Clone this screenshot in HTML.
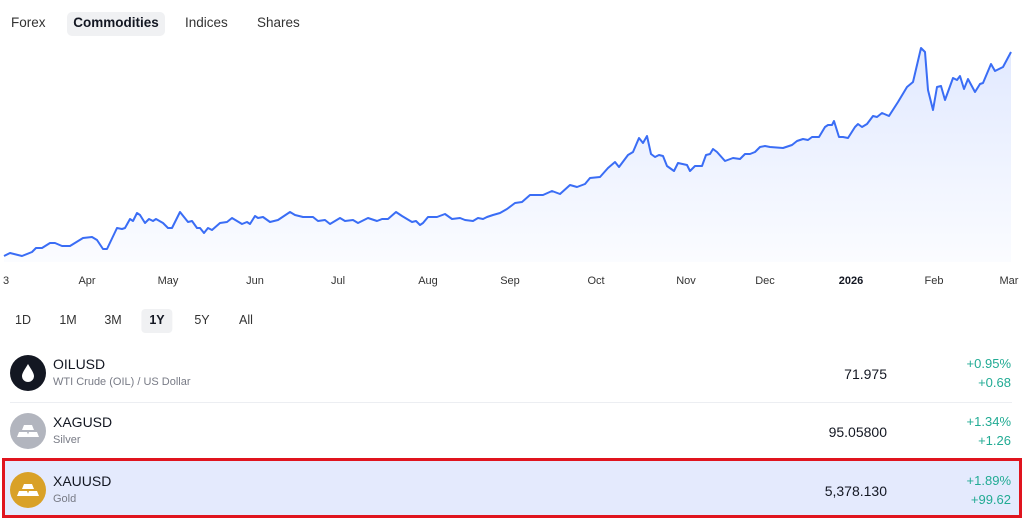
<!DOCTYPE html>
<html><head><meta charset="utf-8"><style>
*{margin:0;padding:0;box-sizing:border-box}
body{width:1024px;height:519px;background:#fff;font-family:"Liberation Sans",sans-serif;color:#131722;position:relative;overflow:hidden}
.a{position:absolute;white-space:nowrap}
.tab{top:12px;height:24px;line-height:22px;font-size:13.5px;color:#333}
.ax{top:275px;font-size:11px;color:#333;transform:translateX(-50%)}
.tb{top:309px;height:24px;line-height:22px;font-size:12.5px;color:#333;transform:translateX(-50%);padding:0 8px;border-radius:4px}
.sym{left:53px;font-size:14px;color:#131722}
.sub{left:53px;font-size:11px;color:#787b86}
.pr{right:137px;font-size:14px;color:#131722}
.ch{right:13px;font-size:13px;color:#22ab94;text-align:right}
.ic{position:absolute;left:10px;width:36px;height:36px;border-radius:50%}
</style></head><body>
<div class="a tab" style="left:11px">Forex</div>
<div class="a tab" style="left:67px;width:98px;background:#f0f1f3;border-radius:5px;text-align:center;font-weight:bold;color:#131722">Commodities</div>
<div class="a tab" style="left:185px">Indices</div>
<div class="a tab" style="left:257px">Shares</div>

<svg class="a" style="left:0;top:0" width="1024" height="270">
<defs><linearGradient id="g" x1="0" y1="0" x2="0" y2="1"><stop offset="0" stop-color="#2962ff" stop-opacity="0.14"/><stop offset="1" stop-color="#2962ff" stop-opacity="0.02"/></linearGradient></defs>
<path d="M4,256 L10,253 L22,256 L32,252 L36,248 L42,248 L50,243 L55,243 L62,246 L70,246 L83,238 L92,237 L97,240 L103,249 L107,249 L117,228 L122,229 L125,228 L130,219 L133,221 L137,213 L140,215 L145,223 L149,219 L153,221 L156,219 L163,223 L168,228 L172,228 L180,212 L188,222 L192,221 L197,228 L200,228 L204,233 L208,228 L212,230 L220,223 L227,222 L232,218 L242,224 L247,222 L250,224 L255,216 L258,218 L263,217 L270,222 L278,220 L290,212 L295,215 L303,217 L313,217 L318,221 L325,220 L330,224 L340,218 L345,221 L353,220 L358,223 L368,218 L377,221 L382,219 L388,219 L396,212 L402,216 L412,222 L416,221 L420,225 L423,223 L428,217 L437,217 L445,214 L452,219 L460,218 L465,220 L473,221 L478,218 L483,219 L487,217 L493,215 L500,213 L507,209 L515,203 L522,202 L530,195 L543,195 L552,191 L560,194 L570,185 L577,187 L585,184 L590,178 L600,177 L608,168 L615,162 L619,167 L628,155 L633,152 L639,138 L643,143 L647,136 L651,154 L655,157 L659,155 L663,156 L667,166 L674,171 L678,163 L687,165 L690,171 L695,166 L702,166 L706,155 L710,154 L713,149 L717,152 L725,161 L733,158 L740,159 L745,154 L750,154 L755,152 L760,147 L765,146 L770,147 L783,148 L792,145 L797,141 L803,139 L808,140 L812,137 L819,137 L825,127 L828,125 L832,125 L834,121 L839,137 L843,137 L848,138 L855,127 L858,124 L862,127 L867,124 L873,116 L877,117 L882,113 L889,116 L898,102 L907,87 L913,82 L921,48 L925,52 L928,90 L933,110 L937,87 L941,86 L945,100 L953,78 L957,80 L960,76 L964,89 L968,79 L975,92 L980,84 L983,83 L991,64 L995,71 L1003,67 L1011,52 L1011,262 L4,262 Z" fill="url(#g)"/>
<path d="M4,256 L10,253 L22,256 L32,252 L36,248 L42,248 L50,243 L55,243 L62,246 L70,246 L83,238 L92,237 L97,240 L103,249 L107,249 L117,228 L122,229 L125,228 L130,219 L133,221 L137,213 L140,215 L145,223 L149,219 L153,221 L156,219 L163,223 L168,228 L172,228 L180,212 L188,222 L192,221 L197,228 L200,228 L204,233 L208,228 L212,230 L220,223 L227,222 L232,218 L242,224 L247,222 L250,224 L255,216 L258,218 L263,217 L270,222 L278,220 L290,212 L295,215 L303,217 L313,217 L318,221 L325,220 L330,224 L340,218 L345,221 L353,220 L358,223 L368,218 L377,221 L382,219 L388,219 L396,212 L402,216 L412,222 L416,221 L420,225 L423,223 L428,217 L437,217 L445,214 L452,219 L460,218 L465,220 L473,221 L478,218 L483,219 L487,217 L493,215 L500,213 L507,209 L515,203 L522,202 L530,195 L543,195 L552,191 L560,194 L570,185 L577,187 L585,184 L590,178 L600,177 L608,168 L615,162 L619,167 L628,155 L633,152 L639,138 L643,143 L647,136 L651,154 L655,157 L659,155 L663,156 L667,166 L674,171 L678,163 L687,165 L690,171 L695,166 L702,166 L706,155 L710,154 L713,149 L717,152 L725,161 L733,158 L740,159 L745,154 L750,154 L755,152 L760,147 L765,146 L770,147 L783,148 L792,145 L797,141 L803,139 L808,140 L812,137 L819,137 L825,127 L828,125 L832,125 L834,121 L839,137 L843,137 L848,138 L855,127 L858,124 L862,127 L867,124 L873,116 L877,117 L882,113 L889,116 L898,102 L907,87 L913,82 L921,48 L925,52 L928,90 L933,110 L937,87 L941,86 L945,100 L953,78 L957,80 L960,76 L964,89 L968,79 L975,92 L980,84 L983,83 L991,64 L995,71 L1003,67 L1011,52" fill="none" stroke="#3a6df5" stroke-width="2" stroke-linejoin="round"/>
</svg>

<div class="a ax" style="left:6px">3</div>
<div class="a ax" style="left:87px">Apr</div>
<div class="a ax" style="left:168px">May</div>
<div class="a ax" style="left:255px">Jun</div>
<div class="a ax" style="left:338px">Jul</div>
<div class="a ax" style="left:428px">Aug</div>
<div class="a ax" style="left:510px">Sep</div>
<div class="a ax" style="left:596px">Oct</div>
<div class="a ax" style="left:686px">Nov</div>
<div class="a ax" style="left:765px">Dec</div>
<div class="a ax" style="left:851px;font-weight:bold;color:#131722">2026</div>
<div class="a ax" style="left:934px">Feb</div>
<div class="a ax" style="left:1009px">Mar</div>

<div class="a tb" style="left:23px">1D</div>
<div class="a tb" style="left:68px">1M</div>
<div class="a tb" style="left:113px">3M</div>
<div class="a tb" style="left:157px;background:#f0f1f3;font-weight:bold;color:#131722">1Y</div>
<div class="a tb" style="left:202px">5Y</div>
<div class="a tb" style="left:246px">All</div>

<div class="a" style="left:10px;top:402px;width:1002px;height:1px;background:#eceef2"></div>
<div class="a" style="left:2px;top:458px;width:1020px;height:60px;background:#e4eafd;border:3px solid #e0141e"></div>

<div class="ic" style="top:355px;background:#131722"><svg width="36" height="36"><path d="M18 9 C15 14 12 18 12 21 A6 6 0 0 0 24 21 C24 18 21 14 18 9Z" fill="#fff"/></svg></div>
<div class="a sym" style="top:356px">OILUSD</div>
<div class="a sub" style="top:376px">WTI Crude (OIL) / US Dollar</div>
<div class="a pr" style="top:366px">71.975</div>
<div class="a ch" style="top:356px">+0.95%</div>
<div class="a ch" style="top:375px">+0.68</div>

<div class="ic" style="top:413px;background:#b2b5be"><svg width="36" height="36" fill="#fff"><path d="M14 12h8l2 5h-12z"/><path d="M9 19h8l2 5H7z"/><path d="M19 19h8l2 5H17z"/></svg></div>
<div class="a sym" style="top:414px">XAGUSD</div>
<div class="a sub" style="top:434px">Silver</div>
<div class="a pr" style="top:424px">95.05800</div>
<div class="a ch" style="top:414px">+1.34%</div>
<div class="a ch" style="top:433px">+1.26</div>

<div class="ic" style="top:472px;background:#d9a127"><svg width="36" height="36" fill="#fff"><path d="M14 12h8l2 5h-12z"/><path d="M9 19h8l2 5H7z"/><path d="M19 19h8l2 5H17z"/></svg></div>
<div class="a sym" style="top:473px">XAUUSD</div>
<div class="a sub" style="top:493px">Gold</div>
<div class="a pr" style="top:483px">5,378.130</div>
<div class="a ch" style="top:473px">+1.89%</div>
<div class="a ch" style="top:492px">+99.62</div>
</body></html>
